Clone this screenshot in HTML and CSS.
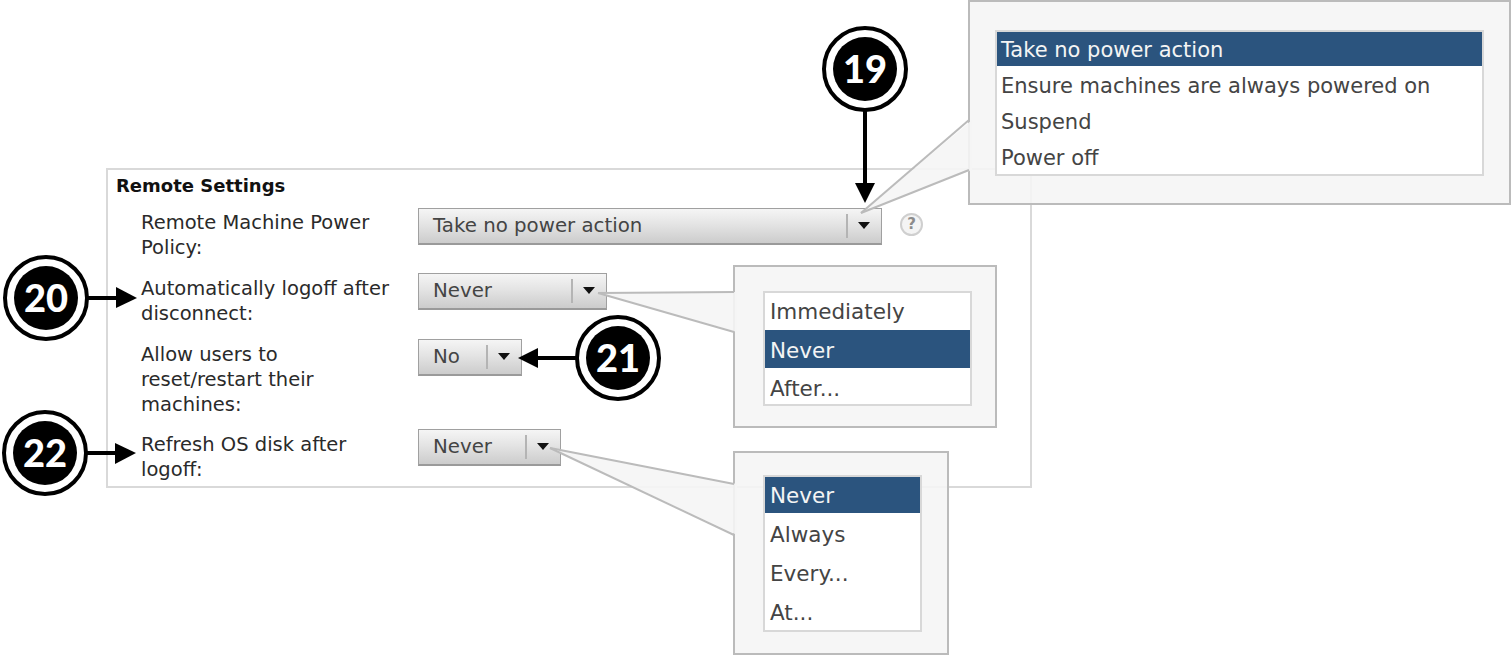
FILE: index.html
```html
<!DOCTYPE html>
<html>
	<head>
		<title>Remote Settings</title>
		<link rel="stylesheet" href="styles.css">
	</head>
	<body>
		<div class="panel">
			<h3>Remote Settings</h3>
			<div class="rows">
				<div class="label">Remote Machine Power<br>Policy:</div>
				<div class="control">
					<div class="drop drop-power"><span>Take no power action</span><i></i></div>
					<div class="help">?</div>
				</div>
				<div class="label">Automatically logoff after<br>disconnect:</div>
				<div class="control">
					<div class="drop drop-logoff"><span>Never</span><i></i></div>
				</div>
				<div class="label">Allow users to<br>reset/restart their<br>machines:</div>
				<div class="control">
					<div class="drop drop-reset"><span>No</span><i></i></div>
				</div>
				<div class="label">Refresh OS disk after<br>logoff:</div>
				<div class="control">
					<div class="drop drop-refresh"><span>Never</span><i></i></div>
				</div>
			</div>
		</div>

		<div class="callout callout-power">
			<ul>
				<li class="sel">Take no power action</li>
				<li>Ensure machines are always powered on</li>
				<li>Suspend</li>
				<li>Power off</li>
			</ul>
		</div>
		<div class="callout callout-logoff">
			<ul>
				<li>Immediately</li>
				<li class="sel">Never</li>
				<li>After...</li>
			</ul>
		</div>
		<div class="callout callout-refresh">
			<ul>
				<li class="sel">Never</li>
				<li>Always</li>
				<li>Every...</li>
				<li>At...</li>
			</ul>
		</div>

		<!-- tails and arrows -->
		<svg class="marks" width="1511" height="655" viewBox="0 0 1511 655">
			<polygon class="tail-fill" points="861,213 972,120 972,170"/>
			<polyline class="tail-line" points="861,213 969,120"/>
			<polyline class="tail-line" points="861,213 969,170"/>
			<polygon class="tail-fill" points="598,293 737,292 737,332"/>
			<polyline class="tail-line" points="598,293 734,292"/>
			<polyline class="tail-line" points="598,293 734,332"/>
			<polygon class="tail-fill" points="550,448 737,484 737,535"/>
			<polyline class="tail-line" points="550,448 734,484"/>
			<polyline class="tail-line" points="550,448 734,535"/>

			<rect x="863" y="108" width="4" height="77"/>
			<polygon points="855,183 875,183 865,203"/>
			<rect x="86" y="296" width="32" height="4"/>
			<polygon points="116,287 116,308 137,298"/>
			<rect x="536" y="356" width="42" height="4"/>
			<polygon points="538,348 538,368 518,358"/>
			<rect x="84" y="451" width="33" height="4"/>
			<polygon points="115,443 115,464 136,453"/>
		</svg>

		<div class="badge badge-19"><b>19</b></div>
		<div class="badge badge-20"><b>20</b></div>
		<div class="badge badge-21"><b>21</b></div>
		<div class="badge badge-22"><b>22</b></div>
	</body>
</html>
```

FILE: styles.css
```css
html, body {
	margin: 0;
	height: 655px;
	overflow: hidden;
	background: #fff;
}
body {
	font-family: "DejaVu Sans", Verdana, sans-serif;
	font-size: 19.5px;
	color: #2a2a2a;
}
.panel {
	box-sizing: border-box;
	width: 926px;
	height: 320px;
	margin: 168px 0 0 106px;
	padding: 5px 0 0 8px;
	border: 2px solid #d9d9d9;
}
.panel h3 {
	margin: 0;
	font-size: 18px;
	line-height: 22px;
	color: #111;
}
.rows {
	display: grid;
	grid-template-columns: 277px 1fr;
	grid-template-rows: 50px 50px 74px 50px;
	row-gap: 16px;
	margin-top: 13px;
	padding-left: 25px;
}
.label {
	line-height: 25px;
}
.control {
	display: flex;
	align-items: flex-start;
	gap: 18px;
}
.drop {
	box-sizing: border-box;
	display: flex;
	align-items: center;
	height: 37px;
	margin-top: -3px;
	padding-left: 14px;
	border: 1px solid #a0a0a0;
	border-bottom: 2px solid #9a9a9a;
	background: linear-gradient(#f5f5f5, #e4e4e4 45%, #cccccc);
	color: #444;
	font-size: 19.8px;
}
.drop span {
	flex: 1;
	margin-top: -2px;
}
.drop i {
	position: relative;
	width: 33px;
	height: 24px;
	border-left: 2px solid #b4b4b4;
}
.drop i::after {
	content: "";
	position: absolute;
	left: 10px;
	top: 8px;
	border: 6px solid transparent;
	border-top: 7px solid #111;
	border-bottom: 0;
}
.drop-power {
	width: 464px;
	margin-top: -2px;
}
.drop-logoff { width: 189px; }
.drop-reset { width: 104px; }
.drop-refresh { width: 143px; }
.help {
	box-sizing: border-box;
	width: 23px;
	height: 23px;
	margin-top: 3px;
	border: 2px solid #cfcfcf;
	border-radius: 50%;
	background: #f4f4f4;
	color: #8c8c8c;
	font-size: 15px;
	font-weight: bold;
	line-height: 19px;
	text-align: center;
}
.callout {
	box-sizing: border-box;
	position: absolute;
	border: 2px solid #bbb;
	background: rgba(245, 245, 245, 0.88);
}
.callout ul {
	margin: 0;
	padding: 0;
	list-style: none;
	border: 2px solid #d8d8d8;
	background: #fff;
	color: #444;
}
.callout .sel {
	background: #2b547e;
	color: #f4f4f4;
}
.callout-power {
	left: 968px;
	top: 0;
	width: 543px;
	height: 205px;
	padding: 28px 25px 0 25px;
	font-size: 21px;
}
.callout-power li {
	height: 36px;
	padding-left: 4px;
	line-height: 40px;
}
.callout-power .sel {
	height: 34px;
	line-height: 36px;
}
.callout-logoff {
	left: 733px;
	top: 265px;
	width: 264px;
	height: 163px;
	padding: 24px 23px 0 28px;
	font-size: 21.5px;
}
.callout-logoff li {
	height: 37px;
	padding-left: 5px;
	line-height: 37px;
}
.callout-logoff .sel {
	height: 38px;
	line-height: 42px;
}
.callout-logoff li:last-child {
	height: 36px;
	line-height: 42px;
}
.callout-refresh {
	left: 733px;
	top: 451px;
	width: 216px;
	height: 204px;
	padding: 22px 25px 0 28px;
	font-size: 21.5px;
}
.callout-refresh li {
	height: 39px;
	padding-left: 5px;
	line-height: 44px;
}
.callout-refresh .sel {
	height: 36px;
	line-height: 38px;
}
.marks {
	position: absolute;
	left: 0;
	top: 0;
}
.tail-fill {
	fill: #f5f5f5;
	fill-opacity: 0.9;
}
.tail-line {
	fill: none;
	stroke: #bbb;
	stroke-width: 2;
}
.badge {
	box-sizing: border-box;
	position: absolute;
	display: flex;
	align-items: center;
	justify-content: center;
	width: 86px;
	height: 86px;
	border: 4px solid #000;
	border-radius: 50%;
	background: #fff;
}
.badge b {
	width: 64px;
	height: 64px;
	border-radius: 50%;
	background: #000;
	color: #fff;
	font-family: Lato, "Open Sans", sans-serif;
	font-size: 38px;
	font-weight: 900;
	line-height: 62px;
	text-align: center;
}
.badge-19 { left: 822px; top: 26px; }
.badge-20 { left: 3px; top: 255px; }
.badge-21 { left: 575px; top: 315px; }
.badge-22 { left: 2px; top: 410px; }
```
